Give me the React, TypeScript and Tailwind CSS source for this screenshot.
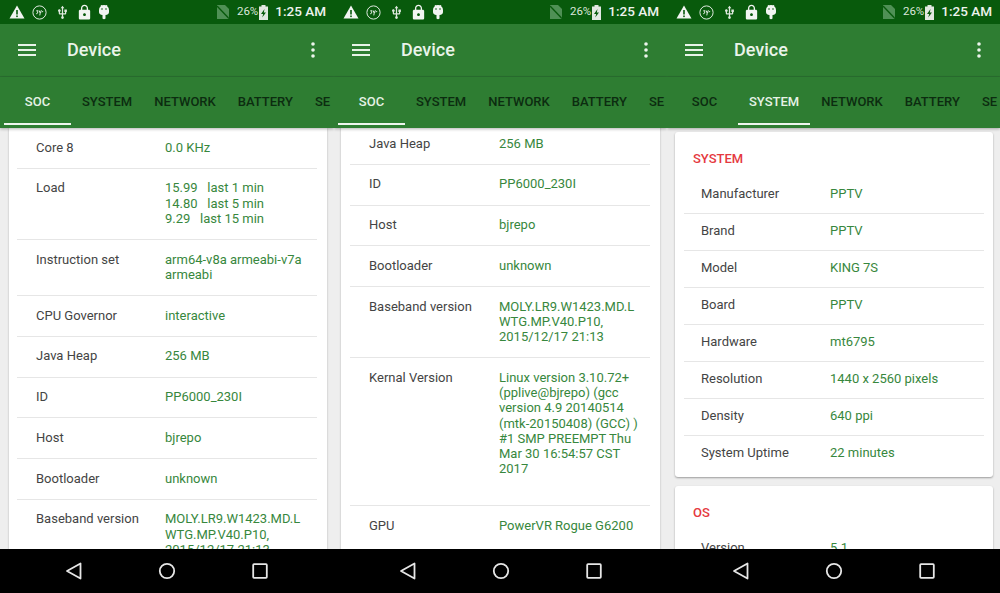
import React from "react";
import { MdUsb, MdLock } from "react-icons/md";

const F = { fontFamily: "Roboto, 'Liberation Sans', sans-serif" };

function StatusBar() {
  return (
    <div className="h-[24px] shrink-0 bg-[#085a0c] flex items-center text-[#e8efe8] relative">
      <div className="flex items-center pl-[9px]">
        <svg width="16" height="14" viewBox="0 0 16 14">
          <path d="M8 0.5 L15.5 13.5 L0.5 13.5 Z" fill="#f2f5f2" />
          <rect x="7.2" y="5" width="1.6" height="4.5" fill="#085a0c" />
          <rect x="7.2" y="10.5" width="1.6" height="1.6" fill="#085a0c" />
        </svg>
        <svg className="ml-[7px]" width="15" height="15" viewBox="0 0 15 15" fill="none" stroke="#dfe9df">
          <circle cx="7.5" cy="7.5" r="6.6" strokeWidth="1" />
          <path d="M4.2 6 Q6 4.4 5.8 7 Q5.6 9 4.2 8.8 M7 5.4 L8.2 8 L9.4 5.2 M8.2 8 L7.8 10.4 M9.6 7 L11.2 6.4" strokeWidth="1" />
        </svg>
        <MdUsb className="ml-[8px]" size={15} color="#dfe9df" />
        <MdLock className="ml-[6px]" size={17} color="#f2f5f2" />
        <svg className="ml-[5px]" width="12" height="16" viewBox="0 0 12 16">
          <path d="M1 6 A5 5 0 0 1 11 6 L11 8 Q11 10.5 7.5 11 L7.5 14.5 Q6 16 4.5 14.5 L4.5 11 Q1 10.5 1 8 Z" fill="#f2f5f2" />
          <path d="M3 1 L4 2.5 M9 1 L8 2.5" stroke="#f2f5f2" strokeWidth="1" />
          <circle cx="4" cy="5" r="0.8" fill="#085a0c" />
          <circle cx="8" cy="5" r="0.8" fill="#085a0c" />
        </svg>
      </div>
      <div className="ml-auto flex items-center pr-[8px]">
        <svg width="12" height="14" viewBox="0 0 12 14">
          <path d="M0 0 H8 L12 4 V14 H0 Z" fill="#4f9055" />
          <path d="M0 1 L12 13.5" stroke="#085a0c" strokeWidth="1.4" />
        </svg>
        <span className="ml-[8px] text-[11.5px] leading-none text-[#dbe6db]">26%</span>
        <svg width="9" height="15" viewBox="0 0 9 15" className="ml-[1px]">
          <rect x="2.5" y="0" width="4" height="2" fill="#e2e8e2" />
          <rect x="0" y="1.5" width="9" height="13.5" fill="#e2e8e2" />
          <path d="M5.5 4 L2 9 H4.2 L3.2 12.5 L7 7.5 H4.8 Z" fill="#085a0c" />
        </svg>
        <span className="ml-[7px] text-[13.5px] leading-none font-medium text-[#eef3ee] whitespace-nowrap">1:25 AM</span>
      </div>
    </div>
  );
}

function AppBar() {
  return (
    <div className="h-[53px] shrink-0 bg-[#2e7d32] border-b border-[#2a7030] flex items-center pb-[1px]">
      <svg className="ml-[18px]" width="18" height="14" viewBox="0 0 18 14" stroke="#e8f3e8" strokeWidth="1.8">
        <path d="M0 2 H18 M0 7 H18 M0 12 H18" />
      </svg>
      <span className="ml-[31px] text-[18px] leading-none font-medium text-[#eaf4ea]">Device</span>
      <svg className="ml-auto mr-[19px]" width="4" height="16" viewBox="0 0 4 16" fill="#edf5ed">
        <circle cx="2" cy="2" r="1.8" />
        <circle cx="2" cy="8" r="1.8" />
        <circle cx="2" cy="14" r="1.8" />
      </svg>
    </div>
  );
}

const TABS = ["SOC", "SYSTEM", "NETWORK", "BATTERY", "SE"];

function Tabs({ active }: { active: number }) {
  return (
    <div className="h-[51px] shrink-0 bg-[#2e7d32] flex pl-[4px] pb-[3px] overflow-hidden shadow-[0_1px_3px_rgba(0,0,0,0.3)] relative z-10">
      {TABS.map((t, i) => (
        <div
          key={t}
          className={`px-[11px] pt-[3px] flex items-center justify-center shrink-0 text-[13px] font-medium border-b-2 ${
            i === 0 ? "min-w-[67px]" : ""
          } ${i === active ? "text-[#e6f2e6] border-[#eef5ee]" : "text-[#0c2c10] border-transparent"}`}
        >
          {t}
        </div>
      ))}
    </div>
  );
}

function NavBar() {
  return (
    <div className="h-[44px] shrink-0 bg-black flex items-center justify-center gap-[73px] relative z-20">
      <svg width="20" height="20" viewBox="0 0 20 20" fill="none" stroke="#e6e6e6" strokeWidth="1.8">
        <path d="M16.5 2.5 V17.5 L3 10 Z" strokeLinejoin="round" />
      </svg>
      <svg width="20" height="20" viewBox="0 0 20 20" fill="none" stroke="#e6e6e6" strokeWidth="1.8">
        <circle cx="10" cy="10" r="7.2" />
      </svg>
      <svg width="20" height="20" viewBox="0 0 20 20" fill="none" stroke="#e6e6e6" strokeWidth="1.8">
        <rect x="3.2" y="3.2" width="13.6" height="13.6" rx="0.8" />
      </svg>
    </div>
  );
}

type RowData = { l: string; v: string[] };

function Row({ l, v, last, compact, labelW }: RowData & { last?: boolean; compact?: boolean; labelW: string }) {
  return (
    <div
      className={`flex text-[13px] ${
        compact ? "leading-[15px] pt-[8.5px] pb-[12.5px] pl-[17px]" : "leading-[15.2px] pt-[11.5px] pb-[13.1px] pl-[19px]"
      } ${last ? "" : "border-b border-[#e6e6e6]"}`}
    >
      <div className={`${labelW} shrink-0 text-[#444] whitespace-nowrap`}>{l}</div>
      <div className="text-[#37873d]">
        {v.map((line, i) => (
          <div key={i} className={`whitespace-pre ${line === "" ? "h-[16px]" : ""}`}>
            {line}
          </div>
        ))}
      </div>
    </div>
  );
}

const BASEBAND: RowData = { l: "Baseband version", v: ["MOLY.LR9.W1423.MD.L", "WTG.MP.V40.P10,", "2015/12/17 21:13"] };

const P1: RowData[] = [
  { l: "Core 8", v: ["0.0 KHz"] },
  { l: "Load", v: ["15.99   last 1 min", "14.80   last 5 min", "9.29   last 15 min"] },
  { l: "Instruction set", v: ["arm64-v8a armeabi-v7a", "armeabi"] },
  { l: "CPU Governor", v: ["interactive"] },
  { l: "Java Heap", v: ["256 MB"] },
  { l: "ID", v: ["PP6000_230I"] },
  { l: "Host", v: ["bjrepo"] },
  { l: "Bootloader", v: ["unknown"] },
  BASEBAND,
];

const P2: RowData[] = [
  { l: "Java Heap", v: ["256 MB"] },
  { l: "ID", v: ["PP6000_230I"] },
  { l: "Host", v: ["bjrepo"] },
  { l: "Bootloader", v: ["unknown"] },
  BASEBAND,
  {
    l: "Kernal Version",
    v: [
      "Linux version 3.10.72+",
      "(pplive@bjrepo) (gcc",
      "version 4.9 20140514",
      "(mtk-20150408) (GCC) )",
      "#1 SMP PREEMPT Thu",
      "Mar 30 16:54:57 CST",
      "2017",
      "",
    ],
  },
  { l: "GPU", v: ["PowerVR Rogue G6200"] },
];

const P3: RowData[] = [
  { l: "Manufacturer", v: ["PPTV"] },
  { l: "Brand", v: ["PPTV"] },
  { l: "Model", v: ["KING 7S"] },
  { l: "Board", v: ["PPTV"] },
  { l: "Hardware", v: ["mt6795"] },
  { l: "Resolution", v: ["1440 x 2560 pixels"] },
  { l: "Density", v: ["640 ppi"] },
  { l: "System Uptime", v: ["22 minutes"] },
];

function Heading({ children }: { children: React.ReactNode }) {
  return <div className="pl-[18px] pt-[19px] pb-[11px] text-[13px] leading-[15px] font-medium text-[#e53940]">{children}</div>;
}

function Screen({ active, className, children }: { active: number; className: string; children: React.ReactNode }) {
  return (
    <div className={`${className} h-full flex flex-col overflow-hidden`}>
      <StatusBar />
      <AppBar />
      <Tabs active={active} />
      <div className="flex-1 min-h-0 overflow-hidden bg-[#eeeeee]">{children}</div>
      <NavBar />
    </div>
  );
}

export default function App() {
  return (
    <div className="w-[1000px] h-[593px] flex overflow-hidden" style={F}>
      <Screen active={0} className="w-[334px]">
        <div className="ml-[9px] mr-[7px] bg-white shadow-[0_0_2px_rgba(0,0,0,0.25)] pl-[8px] pr-[10px] pb-[20px]">
          {P1.map((r) => (
            <Row key={r.l} {...r} labelW="w-[129px]" />
          ))}
        </div>
      </Screen>
      <Screen active={0} className="w-[333px]">
        <div className="-mt-[4px] ml-[7px] mr-[7px] bg-white shadow-[0_0_2px_rgba(0,0,0,0.25)] pl-[9px] pr-[10px] pb-[20px]">
          {P2.map((r, i) => (
            <Row key={r.l} {...r} last={i === P2.length - 1} labelW="w-[130px]" />
          ))}
        </div>
      </Screen>
      <Screen active={1} className="w-[333px]">
        <div className="flex flex-col gap-[9px] pt-[4px] pl-[8px] pr-[7px]">
          <div className="bg-white rounded-[3px] shadow-[0_1px_2px_rgba(0,0,0,0.35)] pl-[9px] pr-[9px] pb-[5px]">
            <div className="-ml-[9px]">
              <Heading>SYSTEM</Heading>
            </div>
            {P3.map((r, i) => (
              <Row key={r.l} {...r} compact last={i === P3.length - 1} labelW="w-[129px]" />
            ))}
          </div>
          <div className="bg-white rounded-[3px] shadow-[0_1px_2px_rgba(0,0,0,0.35)] pl-[9px] pr-[9px] pb-[5px]">
            <div className="-ml-[9px]">
              <Heading>OS</Heading>
            </div>
            <Row l="Version" v={["5.1"]} compact last labelW="w-[129px]" />
          </div>
        </div>
      </Screen>
    </div>
  );
}
